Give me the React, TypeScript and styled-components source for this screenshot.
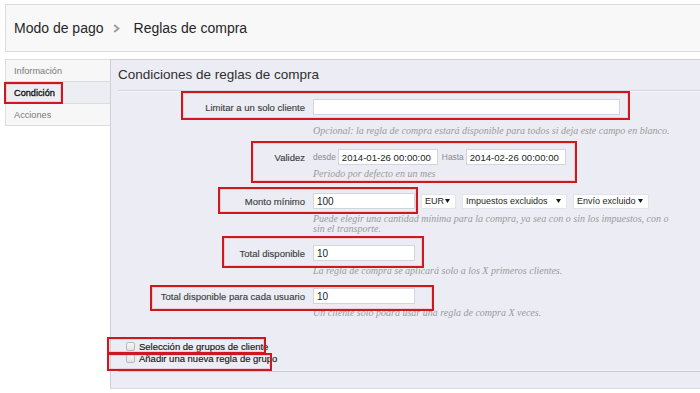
import React from "react";
import styled, { createGlobalStyle } from "styled-components";

const GlobalStyle = createGlobalStyle`
  html, body { margin: 0; padding: 0; background: #ffffff; }
  body { font-family: "Liberation Sans", Arial, sans-serif; }
  * { box-sizing: border-box; }
`;

const Page = styled.div`
  position: relative;
  width: 700px;
  height: 393px;
  overflow: hidden;
  padding: 4px 0 0 5px;
`;

const Header = styled.header`
  width: 720px;
  height: 48px;
  background: #f8f8f8;
  border: 1px solid #dcdcdc;
  border-right: none;
  display: flex;
  align-items: center;
  padding-left: 8px;
  font-size: 14px;
  color: #262626;
`;

const Crumb = styled.span`
  white-space: nowrap;
`;

const Chevron = styled.svg`
  width: 7px;
  height: 9px;
  margin: 1px 14px 0 9px;
`;

const Body = styled.div`
  display: flex;
  margin-top: 7px;
  height: 330px;
`;

const Tabs = styled.nav`
  width: 105px;
  display: flex;
  flex-direction: column;
`;

const Tab = styled.div<{ $active?: boolean; $first?: boolean }>`
  height: ${(p) => (p.$first ? 23 : 22)}px;
  display: flex;
  align-items: center;
  padding-left: 8px;
  border-left: 1px solid #dcdcdc;
  border-bottom: 1px solid #dcdcdc;
  border-top: ${(p) => (p.$first ? "1px solid #dcdcdc" : "none")};
  background: ${(p) => (p.$active ? "#eceef4" : "#f7f7f7")};
  font-size: 9.2px;
  color: ${(p) => (p.$active ? "#111111" : "#7a7a7a")};
  -webkit-text-stroke: ${(p) => (p.$active ? "0.3px #111" : "0")};
`;

const Panel = styled.section`
  flex: 1;
  display: flex;
  flex-direction: column;
  background: #ecedf4;
  border-top: 1px solid #cfd0d7;
  border-left: 1px solid #cfd0d7;
  border-bottom: 1px solid #dadbe1;
`;

const PanelTitle = styled.h2`
  margin: 0 0 0 7px;
  height: 31px;
  line-height: 29px;
  font-size: 13.5px;
  font-weight: normal;
  color: #2e2e2e;
  border-bottom: 1px solid #d5d7df;
  box-shadow: 0 1px 0 #f6f7fb;
`;

const Form = styled.div`
  display: flex;
  flex-direction: column;
  padding-left: 8px;
`;

const FieldRow = styled.div<{ $top: number }>`
  display: grid;
  grid-template-columns: 186px auto;
  column-gap: 8px;
  align-items: center;
  margin-top: ${(p) => p.$top}px;
`;

const Label = styled.label`
  text-align: right;
  font-size: 9.5px;
  color: #404040;
  -webkit-text-stroke: 0.15px #404040;
  white-space: nowrap;
`;

const Controls = styled.div`
  display: flex;
  align-items: center;
`;

const TextInput = styled.input<{ $w: number }>`
  width: ${(p) => p.$w}px;
  height: 16px;
  margin: 0;
  padding: 0 3px;
  border: 1px solid #d3d5dc;
  background: #ffffff;
  font-family: "Liberation Sans", Arial, sans-serif;
  font-size: 10px;
  color: #222222;
  outline: none;
`;

const DateInput = styled(TextInput)`
  font-size: 9.6px;
`;

const Small = styled.span<{ $ml?: number }>`
  font-size: 8.4px;
  color: #8a8a8a;
  margin: 0 2px 0 ${(p) => p.$ml ?? 0}px;
`;

const Select = styled.div<{ $w: number }>`
  width: ${(p) => p.$w}px;
  height: 15px;
  margin-left: 6px;
  display: flex;
  align-items: center;
  justify-content: space-between;
  padding: 0 5px 0 3px;
  background: #ffffff;
  border: 1px solid #e3e4ea;
  font-size: 9px;
  color: #262626;
  white-space: nowrap;
`;

const Arrow = styled.svg`
  width: 5px;
  height: 4px;
  margin-top: -1px;
`;

const Caret = () => (
  <Arrow viewBox="0 0 5 4">
    <polygon points="0,0 5,0 2.5,4" fill="#1a1a1a" />
  </Arrow>
);

const Help = styled.p<{ $top: number; $lh?: number }>`
  grid-column: 2;
  margin: ${(p) => p.$top}px 0 0 0;
  font-family: "Liberation Serif", "Times New Roman", serif;
  font-style: italic;
  font-size: 10px;
  line-height: ${(p) => p.$lh ?? 11}px;
  color: #9a9a9a;
  white-space: nowrap;
`;

const CheckList = styled.div`
  display: flex;
  flex-direction: column;
  margin-top: 22px;
  padding-left: 7px;
`;

const CheckRow = styled.label`
  display: flex;
  align-items: center;
  height: 12px;
  font-size: 9.5px;
  color: #151515;
  -webkit-text-stroke: 0.15px #151515;
  white-space: nowrap;
`;

const CheckBox = styled.span`
  width: 9px;
  height: 9px;
  margin-right: 4px;
  border: 1px solid #b9b9b9;
  border-radius: 2px;
  background: linear-gradient(#f7f7f7, #e2e2e2);
`;

const Footer = styled.div`
  margin: auto 0 0 7px;
  height: 17px;
  border-top: 1px solid #c9cad1;
  box-shadow: 0 -1px 0 #f4f5f9;
`;

const Mark = styled.div<{ $l: number; $t: number; $w: number; $h: number }>`
  position: absolute;
  left: ${(p) => p.$l}px;
  top: ${(p) => p.$t}px;
  width: ${(p) => p.$w}px;
  height: ${(p) => p.$h}px;
  border: 2px solid #cd1820;
  box-shadow: inset 0 0 0 1px rgba(240, 150, 150, 0.35);
  pointer-events: none;
`;

const marks = [
  { l: 4, t: 82, w: 59, h: 22 },
  { l: 181, t: 91, w: 449, h: 29 },
  { l: 251, t: 141, w: 326, h: 42 },
  { l: 218, t: 187, w: 200, h: 27 },
  { l: 222, t: 236, w: 202, h: 32 },
  { l: 150, t: 285, w: 284, h: 26 },
  { l: 107, t: 337, w: 159, h: 17 },
  { l: 107, t: 353, w: 165, h: 18 },
];

export default function App() {
  return (
    <>
      <GlobalStyle />
      <Page>
        <Header>
          <Crumb>Modo de pago</Crumb>
          <Chevron viewBox="0 0 7 9">
            <polyline points="1.2,1 5.5,4.5 1.2,8" fill="none" stroke="#9a9a9a" strokeWidth="1.8" />
          </Chevron>
          <Crumb>Reglas de compra</Crumb>
        </Header>
        <Body>
          <Tabs>
            <Tab $first>Información</Tab>
            <Tab $active>Condición</Tab>
            <Tab>Acciones</Tab>
          </Tabs>
          <Panel>
            <PanelTitle>Condiciones de reglas de compra</PanelTitle>
            <Form>
              <FieldRow $top={8}>
                <Label>Limitar a un solo cliente</Label>
                <Controls>
                  <TextInput $w={307} defaultValue="" />
                </Controls>
                <Help $top={10}>
                  Opcional: la regla de compra estará disponible para todos si deja este campo en blanco.
                </Help>
              </FieldRow>
              <FieldRow $top={13}>
                <Label>Validez</Label>
                <Controls>
                  <Small>desde</Small>
                  <DateInput $w={100} defaultValue="2014-01-26 00:00:00" />
                  <Small $ml={4}>Hasta</Small>
                  <DateInput $w={100} defaultValue="2014-02-26 00:00:00" />
                </Controls>
                <Help $top={3}>Periodo por defecto en un mes</Help>
              </FieldRow>
              <FieldRow $top={14}>
                <Label>Monto mínimo</Label>
                <Controls>
                  <TextInput $w={102} defaultValue="100" />
                  <Select $w={35}>
                    EUR <Caret />
                  </Select>
                  <Select $w={105}>
                    Impuestos excluidos <Caret />
                  </Select>
                  <Select $w={76}>
                    Envío excluido <Caret />
                  </Select>
                </Controls>
                <Help $top={5} $lh={10}>
                  Puede elegir una cantidad mínima para la compra, ya sea con o sin los impuestos, con o
                  <br />
                  sin el transporte.
                </Help>
              </FieldRow>
              <FieldRow $top={11}>
                <Label>Total disponible</Label>
                <Controls>
                  <TextInput $w={102} defaultValue="10" />
                </Controls>
                <Help $top={4}>La regla de compra se aplicará solo a los X primeros clientes.</Help>
              </FieldRow>
              <FieldRow $top={12}>
                <Label>Total disponible para cada usuario</Label>
                <Controls>
                  <TextInput $w={102} defaultValue="10" />
                </Controls>
                <Help $top={3}>Un cliente solo podrá usar una regla de compra X veces.</Help>
              </FieldRow>
              <CheckList>
                <CheckRow>
                  <CheckBox />
                  Selección de grupos de cliente
                </CheckRow>
                <CheckRow>
                  <CheckBox />
                  Añadir una nueva regla de grupo
                </CheckRow>
              </CheckList>
            </Form>
            <Footer />
          </Panel>
        </Body>
        {marks.map((m, i) => (
          <Mark key={i} $l={m.l} $t={m.t} $w={m.w} $h={m.h} />
        ))}
      </Page>
    </>
  );
}
